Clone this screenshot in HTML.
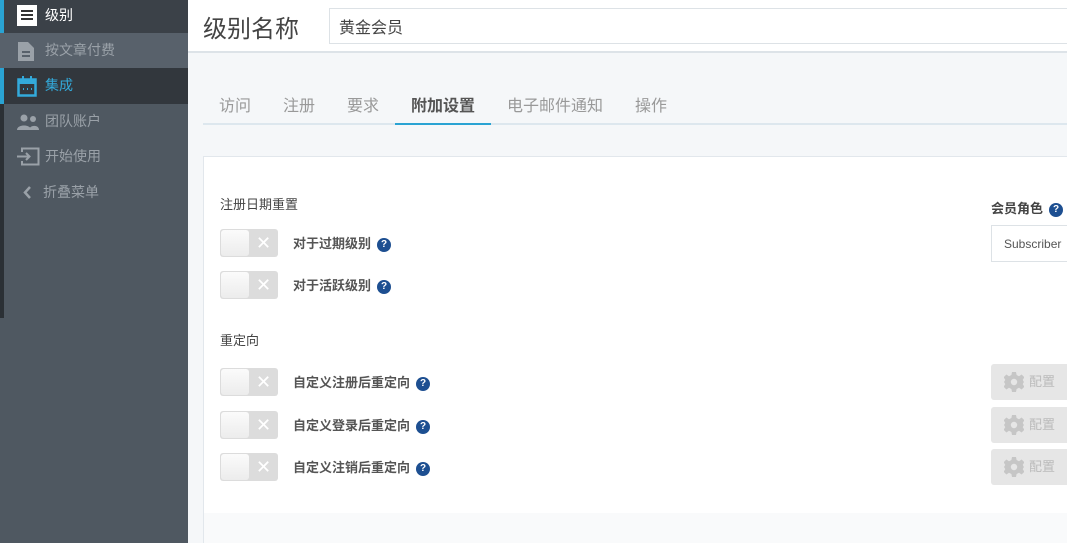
<!DOCTYPE html>
<html><head><meta charset="utf-8"><style>
*{margin:0;padding:0;box-sizing:border-box}
html,body{width:1067px;height:543px;overflow:hidden}
body{background:#f5f7f9;font-family:"Liberation Sans","Noto Sans CJK SC",sans-serif;position:relative}
.a{position:absolute}
.side{left:0;top:0;width:188px;height:543px;background:#4f5861}
.row{position:absolute;left:0;width:188px;height:35px;color:#9aa1a8;font-size:14px;line-height:35px;padding-left:45px}
.tog{position:absolute;left:220px;width:58px;height:28px;background:#dcdcdc;border-radius:3px}
.tog i{position:absolute;left:1px;top:1px;width:28px;height:26px;background:linear-gradient(#fbfbfb,#ececec);border-radius:3px}
.tog b{position:absolute;left:36px;top:3px;color:#fff;font-size:18px;font-weight:normal;line-height:22px}
.lbl{position:absolute;left:293px;font-size:13px;font-weight:bold;color:#555}
.q{display:inline-block;width:14px;height:14px;border-radius:50%;background:#1d4f91;color:#fff;font-size:10px;line-height:14px;text-align:center;vertical-align:1px;margin-left:6px;font-weight:bold}
.btn{position:absolute;left:991px;width:80px;height:36px;background:#e6e6e6;border-radius:3px;color:#bbb;font-size:13px;line-height:36px;padding-left:38px}
.btn svg{position:absolute;left:13px;top:8px}
.tab{position:absolute;top:92px;font-size:16px;color:#999}
</style></head><body>
<div class="a side"></div>
<div class="a" style="left:0;top:0;width:4px;height:318px;background:#2b3035"></div>
<div class="row" style="top:0;height:33px;line-height:30px;background:#3b4148;color:#fff;border-left:4px solid #2aa3d3;padding-left:41px">级别</div>
<div class="a" style="left:17px;top:5px;width:20px;height:21px;background:#fff"><div style="margin:5px 4px;height:2px;background:#333;box-shadow:0 4px 0 #333,0 8px 0 #333"></div></div>
<div class="row" style="top:33px;background:#58616b">按文章付费</div>
<svg class="a" style="left:18px;top:42px" width="16" height="19"><path d="M0 0H10L16 6V19H0Z" fill="#9aa1a8"/><path d="M4 10H12M4 14H12" stroke="#58616b" stroke-width="2"/></svg>
<div class="row" style="top:68px;height:36px;background:#32373d;color:#33aadb;border-left:4px solid #2aa3d3;padding-left:41px">集成</div>
<svg class="a" style="left:17px;top:76px" width="20" height="21"><rect x="1.5" y="3.5" width="17" height="16" fill="none" stroke="#33aadb" stroke-width="2.5"/><rect x="1" y="3" width="18" height="5" fill="#33aadb"/><rect x="5" y="0" width="2" height="4" fill="#33aadb"/><rect x="13" y="0" width="2" height="4" fill="#33aadb"/><path d="M6 13h1M10 13h1M14 13h1" stroke="#33aadb" stroke-width="2"/></svg>
<div class="row" style="top:104px">团队账户</div>
<svg class="a" style="left:17px;top:114px" width="22" height="16"><circle cx="7" cy="4" r="3.5" fill="#9aa1a8"/><circle cx="16" cy="5" r="3" fill="#9aa1a8"/><path d="M0 16C0 10 14 10 14 16ZM12 16C12 11 22 10 22 16Z" fill="#9aa1a8"/></svg>
<div class="row" style="top:139px">开始使用</div>
<svg class="a" style="left:16px;top:147px" width="24" height="19"><path d="M6 5V1.5H22.5V17.5H6V14" fill="none" stroke="#9aa1a8" stroke-width="2"/><path d="M1 9.5H13M10 6L13.5 9.5L10 13" fill="none" stroke="#9aa1a8" stroke-width="2"/></svg>
<div class="row" style="top:175px;padding-left:43px">折叠菜单</div>
<svg class="a" style="left:23px;top:186px" width="9" height="13"><path d="M7 1L2 6.5L7 12" fill="none" stroke="#9aa1a8" stroke-width="2.5"/></svg>

<div class="a" style="left:188px;top:0;width:879px;height:53px;background:#fff;border-bottom:2px solid #dde3e8"></div>
<div class="a" style="left:203px;top:9px;font-size:24px;color:#444">级别名称</div>
<div class="a" style="left:329px;top:8px;width:760px;height:36px;border:1px solid #dde2e6;background:#fff;font-size:16px;color:#444;padding:5px 9px">黄金会员</div>

<div class="tab" style="left:219px">访问</div>
<div class="tab" style="left:283px">注册</div>
<div class="tab" style="left:347px">要求</div>
<div class="tab" style="left:411px;color:#555;font-weight:bold">附加设置</div>
<div class="tab" style="left:507px">电子邮件通知</div>
<div class="tab" style="left:635px">操作</div>
<div class="a" style="left:203px;top:123px;width:864px;height:2px;background:#dde7ee"></div>
<div class="a" style="left:395px;top:123px;width:96px;height:2px;background:#2aa3d3"></div>

<div class="a" style="left:203px;top:156px;width:870px;height:390px;border:1px solid #e2e7ec;background:#f9fafb"></div>
<div class="a" style="left:204px;top:157px;width:863px;height:356px;background:#fff"></div>

<div class="a" style="left:220px;top:194px;font-size:13px;color:#444">注册日期重置</div>
<div class="tog" style="top:229px"><i></i><b>✕</b></div>
<div class="lbl" style="top:233px">对于过期级别<span class="q">?</span></div>
<div class="tog" style="top:271px"><i></i><b>✕</b></div>
<div class="lbl" style="top:275px">对于活跃级别<span class="q">?</span></div>
<div class="a" style="left:220px;top:330px;font-size:13px;color:#444">重定向</div>
<div class="tog" style="top:368px"><i></i><b>✕</b></div>
<div class="lbl" style="top:372px">自定义注册后重定向<span class="q">?</span></div>
<div class="tog" style="top:411px"><i></i><b>✕</b></div>
<div class="lbl" style="top:415px">自定义登录后重定向<span class="q">?</span></div>
<div class="tog" style="top:453px"><i></i><b>✕</b></div>
<div class="lbl" style="top:457px">自定义注销后重定向<span class="q">?</span></div>

<div class="a" style="left:991px;top:198px;font-size:13px;font-weight:bold;color:#444;white-space:nowrap">会员角色<span class="q">?</span></div>
<div class="a" style="left:991px;top:225px;width:90px;height:37px;border:1px solid #dde2e6;background:#fff;font-size:12px;color:#555;padding:11px 12px">Subscriber</div>

<div class="btn" style="top:364px"><svg width="20" height="20" viewBox="0 0 20 20"><path d="M8 0h4l.6 3 2.4 1.2 2.6-1.7 2.8 2.8-1.7 2.6L19.9 10v0l-1.2 2.1 1.7 2.6-2.8 2.8-2.6-1.7-2.4 1.2L12 20H8l-.6-3-2.4-1.2-2.6 1.7L-.4 14.7l1.7-2.6L0 10l1.3-2.1L-.4 5.3 2.4 2.5 5 4.2 7.4 3Z" fill="#c6c6c6"/><circle cx="10" cy="10" r="3.2" fill="#e6e6e6"/></svg>配置</div>
<div class="btn" style="top:407px"><svg width="20" height="20" viewBox="0 0 20 20"><path d="M8 0h4l.6 3 2.4 1.2 2.6-1.7 2.8 2.8-1.7 2.6L19.9 10v0l-1.2 2.1 1.7 2.6-2.8 2.8-2.6-1.7-2.4 1.2L12 20H8l-.6-3-2.4-1.2-2.6 1.7L-.4 14.7l1.7-2.6L0 10l1.3-2.1L-.4 5.3 2.4 2.5 5 4.2 7.4 3Z" fill="#c6c6c6"/><circle cx="10" cy="10" r="3.2" fill="#e6e6e6"/></svg>配置</div>
<div class="btn" style="top:449px"><svg width="20" height="20" viewBox="0 0 20 20"><path d="M8 0h4l.6 3 2.4 1.2 2.6-1.7 2.8 2.8-1.7 2.6L19.9 10v0l-1.2 2.1 1.7 2.6-2.8 2.8-2.6-1.7-2.4 1.2L12 20H8l-.6-3-2.4-1.2-2.6 1.7L-.4 14.7l1.7-2.6L0 10l1.3-2.1L-.4 5.3 2.4 2.5 5 4.2 7.4 3Z" fill="#c6c6c6"/><circle cx="10" cy="10" r="3.2" fill="#e6e6e6"/></svg>配置</div>
</body></html>
